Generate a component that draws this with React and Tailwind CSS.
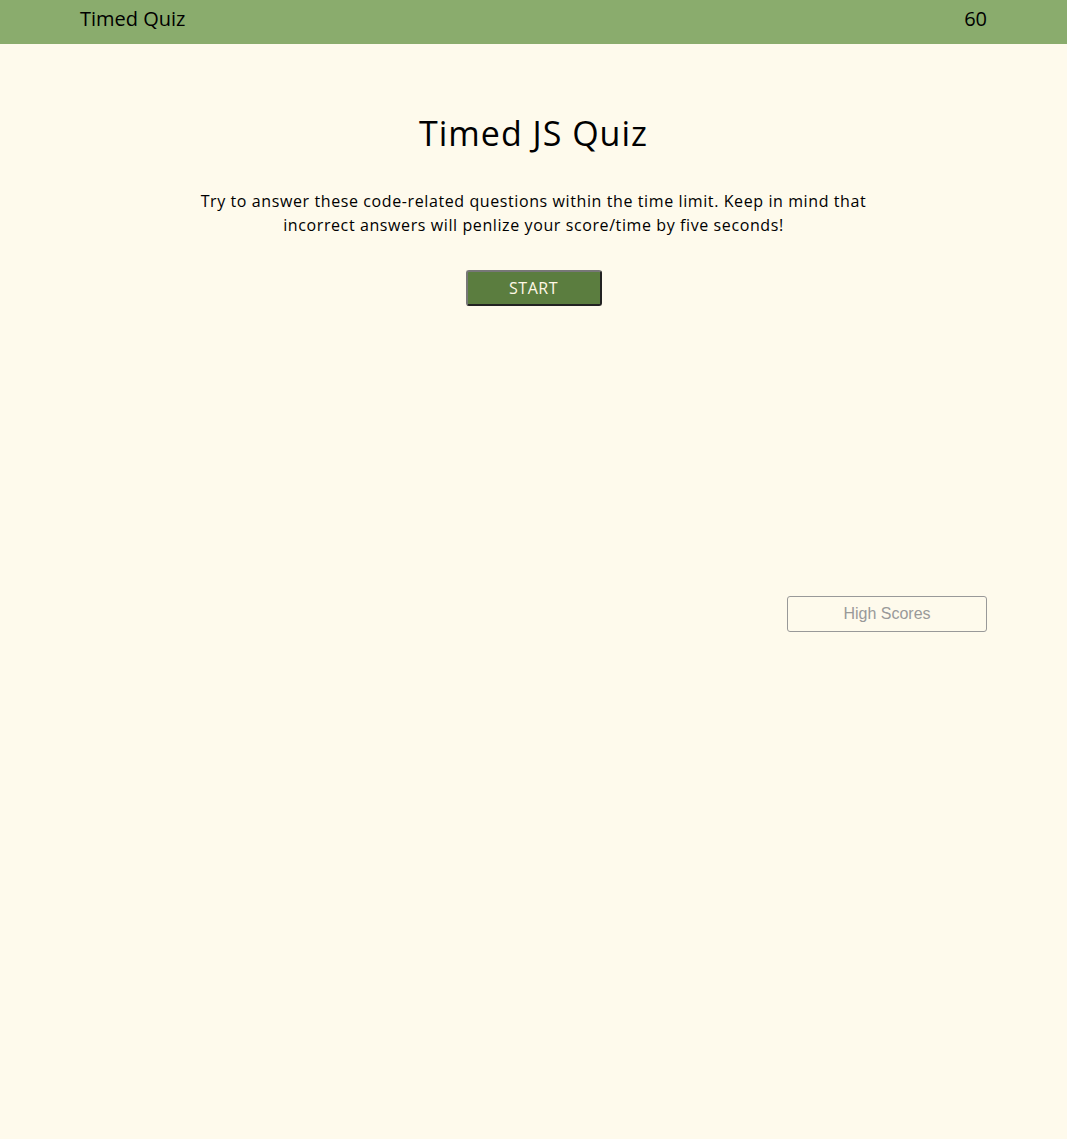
export default function App() {
  return (
    <div className="min-h-[1139px] bg-[#fefaec] text-black" style={{ fontFamily: '"Open Sans", sans-serif' }}>
      <header className="h-[44px] bg-[#8aac6d] flex items-center justify-between px-[80px] pb-[6px]">
        <span className="text-[20px] leading-[28px] font-medium">Timed Quiz</span>
        <span className="text-[20px] leading-[28px] font-medium">60</span>
      </header>
      <main className="flex flex-col items-center">
        <h1 className="mt-[66px] text-[34px] leading-[46px] font-medium tracking-[1px]">Timed JS Quiz</h1>
        <p className="mt-[33px] w-[700px] text-center text-[16px] leading-[24px] tracking-[0.6px]">
          Try to answer these code-related questions within the time limit. Keep in mind that incorrect answers will penlize your score/time by five seconds!
        </p>
        <button className="mt-[33px] w-[136px] h-[36px] bg-[#5b7d3f] text-[#fff8e6] text-[16px] tracking-[0.5px] rounded-[3px] border-2 border-t-[#777] border-l-[#777] border-r-[#222] border-b-[#222]">
          START
        </button>
      </main>
      <div className="flex justify-end pr-[80px] mt-[290px]">
        <button className="w-[200px] h-[36px] border border-[#999] rounded-[3px] text-[#999] text-[16px]" style={{ fontFamily: '"Liberation Sans", Arial, sans-serif' }}>
          High Scores
        </button>
      </div>
    </div>
  );
}
